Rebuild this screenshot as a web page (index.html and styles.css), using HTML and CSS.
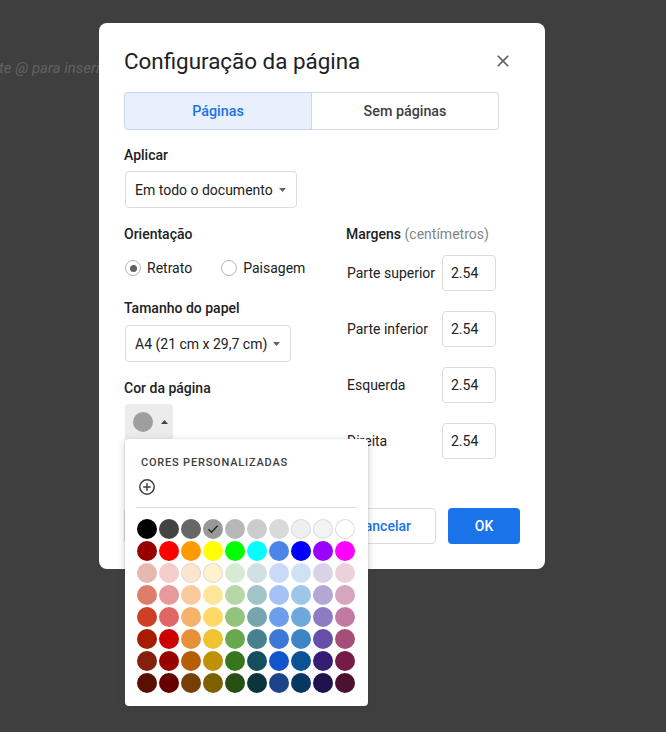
FILE: index.html
```html
<!DOCTYPE html>
<html lang="pt-BR">
<head>
<meta charset="utf-8">
<title>Configuração da página</title>
<link rel="stylesheet" href="styles.css">
</head>
<body>
<div class="doc"><span class="placeholder">te @ para inserir</span></div>

<div class="dialog">
  <div class="dialog-head">
    <h1 class="title">Configuração da página</h1>
    <button class="close" aria-label="Fechar">
      <svg width="20" height="20" viewBox="0 0 24 24"><path d="M19 6.41L17.59 5 12 10.59 6.41 5 5 6.41 10.59 12 5 17.59 6.41 19 12 13.41 17.59 19 19 17.59 13.41 12z" fill="#5f6368"/></svg>
    </button>
  </div>

  <div class="tabs">
    <div class="tab active">Páginas</div>
    <div class="tab">Sem páginas</div>
  </div>

  <div class="label label-apply">Aplicar</div>
  <div class="select select-apply">
    <span>Em todo o documento</span>
    <svg class="caret" width="7" height="4" viewBox="0 0 7 4"><path d="M0 0h7L3.5 4z" fill="#5f6368"/></svg>
  </div>

  <div class="columns">
    <div class="col-left">
      <div class="label">Orientação</div>
      <div class="radios">
        <div class="radio-item"><span class="radio checked"></span><span>Retrato</span></div>
        <div class="radio-item"><span class="radio"></span><span>Paisagem</span></div>
      </div>

      <div class="label label-gap">Tamanho do papel</div>
      <div class="select select-paper">
        <span>A4 (21 cm x 29,7 cm)</span>
        <svg class="caret" width="7" height="4" viewBox="0 0 7 4"><path d="M0 0h7L3.5 4z" fill="#5f6368"/></svg>
      </div>

      <div class="label label-color">Cor da página</div>
      <div class="color-wrap">
        <div class="color-btn">
          <span class="color-dot"></span>
          <svg class="caret-up" width="7" height="4" viewBox="0 0 7 4"><path d="M0 4h7L3.5 0z" fill="#444"/></svg>
        </div>

        <div class="palette">
          <div class="palette-title">CORES PERSONALIZADAS</div>
          <div class="palette-add">
            <svg width="18" height="18" viewBox="0 0 18 18"><circle cx="9" cy="9" r="7.2" fill="none" stroke="#3c4043" stroke-width="1.5"/><path d="M9 5.2v7.6M5.2 9h7.6" stroke="#3c4043" stroke-width="1.5"/></svg>
          </div>
          <div class="palette-divider"></div>
          <div class="swatches">
            <span class="sw" style="background:#000000"></span>
            <span class="sw" style="background:#434343"></span>
            <span class="sw" style="background:#666666"></span>
            <span class="sw selected" style="background:#999999"><svg width="20" height="20" viewBox="0 0 20 20"><path d="M5.5 10.3l3 3 6-6.6" fill="none" stroke="#202124" stroke-width="1.4"/></svg></span>
            <span class="sw" style="background:#b7b7b7"></span>
            <span class="sw" style="background:#cccccc"></span>
            <span class="sw" style="background:#d9d9d9"></span>
            <span class="sw light" style="background:#efefef"></span>
            <span class="sw light" style="background:#f3f3f3"></span>
            <span class="sw light" style="background:#ffffff"></span>

            <span class="sw" style="background:#980000"></span>
            <span class="sw" style="background:#ff0000"></span>
            <span class="sw" style="background:#ff9900"></span>
            <span class="sw" style="background:#ffff00"></span>
            <span class="sw" style="background:#00ff00"></span>
            <span class="sw" style="background:#00ffff"></span>
            <span class="sw" style="background:#4a86e8"></span>
            <span class="sw" style="background:#0000ff"></span>
            <span class="sw" style="background:#9900ff"></span>
            <span class="sw" style="background:#ff00ff"></span>

            <span class="sw" style="background:#e6b8af"></span>
            <span class="sw" style="background:#f4cccc"></span>
            <span class="sw light" style="background:#fce5cd"></span>
            <span class="sw light" style="background:#fff2cc"></span>
            <span class="sw" style="background:#d9ead3"></span>
            <span class="sw" style="background:#d0e0e3"></span>
            <span class="sw" style="background:#c9daf8"></span>
            <span class="sw" style="background:#cfe2f3"></span>
            <span class="sw" style="background:#d9d2e9"></span>
            <span class="sw" style="background:#ead1dc"></span>

            <span class="sw" style="background:#dd7e6b"></span>
            <span class="sw" style="background:#ea9999"></span>
            <span class="sw" style="background:#f9cb9c"></span>
            <span class="sw" style="background:#ffe599"></span>
            <span class="sw" style="background:#b6d7a8"></span>
            <span class="sw" style="background:#a2c4c9"></span>
            <span class="sw" style="background:#a4c2f4"></span>
            <span class="sw" style="background:#9fc5e8"></span>
            <span class="sw" style="background:#b4a7d6"></span>
            <span class="sw" style="background:#d5a6bd"></span>

            <span class="sw" style="background:#cc4125"></span>
            <span class="sw" style="background:#e06666"></span>
            <span class="sw" style="background:#f6b26b"></span>
            <span class="sw" style="background:#ffd966"></span>
            <span class="sw" style="background:#93c47d"></span>
            <span class="sw" style="background:#76a5af"></span>
            <span class="sw" style="background:#6d9eeb"></span>
            <span class="sw" style="background:#6fa8dc"></span>
            <span class="sw" style="background:#8e7cc3"></span>
            <span class="sw" style="background:#c27ba0"></span>

            <span class="sw" style="background:#a61c00"></span>
            <span class="sw" style="background:#cc0000"></span>
            <span class="sw" style="background:#e69138"></span>
            <span class="sw" style="background:#f1c232"></span>
            <span class="sw" style="background:#6aa84f"></span>
            <span class="sw" style="background:#45818e"></span>
            <span class="sw" style="background:#3c78d8"></span>
            <span class="sw" style="background:#3d85c6"></span>
            <span class="sw" style="background:#674ea7"></span>
            <span class="sw" style="background:#a64d79"></span>

            <span class="sw" style="background:#85200c"></span>
            <span class="sw" style="background:#990000"></span>
            <span class="sw" style="background:#b45f06"></span>
            <span class="sw" style="background:#bf9000"></span>
            <span class="sw" style="background:#38761d"></span>
            <span class="sw" style="background:#134f5c"></span>
            <span class="sw" style="background:#1155cc"></span>
            <span class="sw" style="background:#0b5394"></span>
            <span class="sw" style="background:#351c75"></span>
            <span class="sw" style="background:#741b47"></span>

            <span class="sw" style="background:#5b0f00"></span>
            <span class="sw" style="background:#660000"></span>
            <span class="sw" style="background:#783f04"></span>
            <span class="sw" style="background:#7f6000"></span>
            <span class="sw" style="background:#274e13"></span>
            <span class="sw" style="background:#0c343d"></span>
            <span class="sw" style="background:#1c4587"></span>
            <span class="sw" style="background:#073763"></span>
            <span class="sw" style="background:#20124d"></span>
            <span class="sw" style="background:#4c1130"></span>
          </div>
        </div>
      </div>
    </div>

    <div class="col-right">
      <div class="label">Margens <span class="unit">(centímetros)</span></div>
      <div class="margins">
        <div class="margin-row"><span class="margin-label">Parte superior</span><span class="input">2.54</span></div>
        <div class="margin-row"><span class="margin-label">Parte inferior</span><span class="input">2.54</span></div>
        <div class="margin-row"><span class="margin-label">Esquerda</span><span class="input">2.54</span></div>
        <div class="margin-row"><span class="margin-label">Direita</span><span class="input">2.54</span></div>
      </div>
    </div>
  </div>

  <div class="footer">
    <button class="btn btn-outline">Definir como padrão</button>
    <div class="footer-right">
      <button class="btn btn-outline">Cancelar</button>
      <button class="btn btn-primary">OK</button>
    </div>
  </div>
</div>
</body>
</html>
```

FILE: styles.css
```css
* {
  box-sizing: border-box;
}

html, body {
  margin: 0;
  padding: 0;
}

body {
  width: 666px;
  height: 732px;
  overflow: hidden;
  background: #3f3f3f;
  font-family: Roboto, "Liberation Sans", Arial, sans-serif;
  color: #202124;
  position: relative;
}

.doc {
  padding-top: 58px;
  white-space: nowrap;
}

.placeholder {
  display: inline-block;
  margin-left: -1px;
  font-style: italic;
  font-size: 15px;
  line-height: 20px;
  color: #626262;
}

/* Dialog overlay */
.dialog {
  position: absolute;
  left: 99px;
  top: 23px;
  width: 446px;
  background: #ffffff;
  border-radius: 8px;
  padding: 24px 25px 25px 25px;
}

.dialog-head {
  display: flex;
  align-items: center;
  justify-content: space-between;
  height: 28px;
}

.title {
  margin: 0;
  font-size: 22.4px;
  font-weight: 400;
  line-height: 28px;
  color: #202124;
}

.close {
  width: 24px;
  height: 24px;
  margin-right: 5px;
  padding: 0;
  border: 0;
  background: transparent;
  display: flex;
  align-items: center;
  justify-content: center;
}

.tabs {
  margin-top: 17px;
  width: 375px;
  height: 38px;
  display: flex;
}

.tab {
  flex: 0 0 auto;
  height: 38px;
  display: flex;
  align-items: center;
  justify-content: center;
  font-size: 14.3px;
  font-weight: 500;
  color: #3c4043;
  border: 1px solid #dadce0;
}

.tab:first-child {
  width: 188px;
  border-radius: 4px 0 0 4px;
}

.tab:last-child {
  width: 187px;
  border-left: 0;
  border-radius: 0 4px 4px 0;
}

.tab.active {
  background: #e8f0fe;
  border-color: #c3d6f7;
  color: #1a73e8;
}

.label {
  font-size: 14px;
  font-weight: 500;
  line-height: 20px;
  color: #202124;
}

.label-apply {
  margin-top: 15px;
}

.unit {
  font-weight: 400;
  color: #80868b;
}

.select {
  display: inline-flex;
  align-items: center;
  gap: 6px;
  height: 37px;
  margin-left: 1px;
  padding: 0 10px 0 9px;
  border: 1px solid #dadce0;
  border-radius: 4px;
  font-size: 14px;
  color: #202124;
  white-space: nowrap;
}

.caret {
  flex: none;
  margin-top: 1px;
}

.select-apply {
  margin-top: 6px;
}

.columns {
  margin-top: 16px;
  display: grid;
  grid-template-columns: 222px 1fr;
}

.col-left {
  display: flex;
  flex-direction: column;
  align-items: flex-start;
}

.radios {
  margin-top: 14px;
  height: 20px;
  display: flex;
  align-items: center;
  font-size: 14px;
  color: #202124;
}

.radio-item {
  display: flex;
  align-items: center;
  gap: 6px;
  margin-left: 1px;
}

.radio-item + .radio-item {
  margin-left: 29px;
}

.radio {
  width: 16px;
  height: 16px;
  border: 1px solid #b6b6b6;
  border-radius: 50%;
  display: flex;
  align-items: center;
  justify-content: center;
}

.radio.checked::after {
  content: "";
  width: 7px;
  height: 7px;
  border-radius: 50%;
  background: #5f6368;
}

.label-gap {
  margin-top: 20px;
}

.select-paper {
  margin-top: 7px;
}

.label-color {
  margin-top: 16px;
}

.color-wrap {
  position: relative;
  margin-top: 6px;
  margin-left: 1px;
}

.color-btn {
  width: 48px;
  height: 36px;
  background: #ececec;
  border-radius: 4px 4px 0 0;
  display: flex;
  align-items: center;
  padding-left: 8px;
  gap: 8px;
}

.color-dot {
  width: 20px;
  height: 20px;
  border-radius: 50%;
  background: #9e9e9e;
}

.caret-up {
  flex: none;
}

/* Colour palette popup */
.palette {
  position: absolute;
  top: 35px;
  left: 0;
  z-index: 10;
  width: 243px;
  background: #ffffff;
  border-radius: 4px;
  padding: 16px 11px 12px 11px;
  box-shadow: 0 1px 2px rgba(60, 64, 67, 0.3), 0 2px 6px 2px rgba(60, 64, 67, 0.15);
}

.palette-title {
  padding-left: 5px;
  font-size: 11px;
  font-weight: 500;
  line-height: 16px;
  letter-spacing: 0.8px;
  color: #3c4043;
}

.palette-add {
  margin-top: 6px;
  height: 20px;
  padding-left: 2px;
  display: flex;
  align-items: center;
}

.palette-divider {
  margin-top: 10px;
  height: 1px;
  background: #dadce0;
}

.swatches {
  margin-top: 10px;
  display: grid;
  grid-template-columns: repeat(10, 22px);
  grid-auto-rows: 22px;
}

.sw {
  width: 20px;
  height: 20px;
  margin: 1px;
  border-radius: 50%;
  display: flex;
}

.sw.light {
  box-shadow: inset 0 0 0 1px #dcdcdc;
}

/* Right column */
.col-right {
  display: flex;
  flex-direction: column;
}

.margins {
  margin-top: 11px;
  display: flex;
  flex-direction: column;
  gap: 20px;
}

.margin-row {
  display: flex;
  align-items: center;
  height: 36px;
  font-size: 14px;
  color: #202124;
}

.margin-label {
  width: 96px;
  padding-left: 1px;
}

.input {
  width: 54px;
  height: 36px;
  border: 1px solid #dadce0;
  border-radius: 4px;
  padding-left: 8px;
  display: flex;
  align-items: center;
}

/* Footer */
.footer {
  margin-top: 49px;
  display: flex;
  align-items: center;
  justify-content: space-between;
}

.footer-right {
  display: flex;
  gap: 12px;
}

.btn {
  height: 36px;
  border-radius: 4px;
  font-family: Roboto, "Liberation Sans", Arial, sans-serif;
  font-size: 14px;
  font-weight: 500;
  padding: 0 24px;
  cursor: pointer;
}

.btn-outline {
  background: #ffffff;
  border: 1px solid #dadce0;
  color: #1a73e8;
}

.btn-primary {
  width: 72px;
  padding: 0;
  background: #1a73e8;
  border: 0;
  color: #ffffff;
}
```
